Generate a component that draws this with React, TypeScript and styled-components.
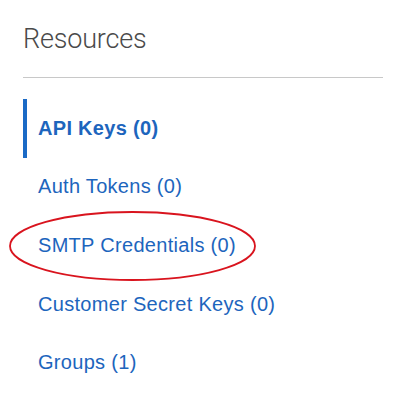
import styled, { createGlobalStyle } from "styled-components";

const GlobalStyle = createGlobalStyle`
  body {
    margin: 0;
    background: #ffffff;
    font-family: "Liberation Sans", Arial, sans-serif;
  }
`;

const resources = [
  { label: "API Keys", count: 0, active: true },
  { label: "Auth Tokens", count: 0 },
  { label: "SMTP Credentials", count: 0, circled: true },
  { label: "Customer Secret Keys", count: 0 },
  { label: "Groups", count: 1 },
];

export default function App() {
  return (
    <>
      <GlobalStyle />
      <Panel>
        <Heading>Resources</Heading>
        <Divider />
        <Menu>
          {resources.map((r) => (
            <Item key={r.label} $active={!!r.active}>
              <Link $active={!!r.active}>
                {r.label} ({r.count})
              </Link>
              {r.circled && (
                // red annotation ring around the item
                <Circle viewBox="0 0 249 72">
                  <ellipse
                    cx="124.5"
                    cy="36"
                    rx="122.5"
                    ry="34"
                    fill="none"
                    stroke="#d9141e"
                    strokeWidth="1.8"
                  />
                </Circle>
              )}
            </Item>
          ))}
        </Menu>
      </Panel>
    </>
  );
}

const Panel = styled.div`
  width: 400px;
  height: 420px;
  padding: 22px 17px 0 23px;
  box-sizing: border-box;
`;

const Heading = styled.h2`
  margin: 0;
  font-family: "Roboto", "Liberation Sans", sans-serif;
  font-weight: 300;
  font-size: 27px;
  line-height: 34px;
  color: #4a4a4a;
  letter-spacing: -0.2px;
`;

const Divider = styled.div`
  height: 1px;
  background: #c8c8c8;
  margin-top: 21px;
`;

const Menu = styled.ul`
  list-style: none;
  margin: 21px 0 0;
  padding: 0;
  display: flex;
  flex-direction: column;
`;

const Item = styled.li<{ $active: boolean }>`
  position: relative;
  height: 58.6px;
  display: flex;
  align-items: center;
  box-sizing: border-box;
  border-left: 4px solid ${(p) => (p.$active ? "#1a6ac6" : "transparent")};
  padding-left: 11px;
`;

const Link = styled.a<{ $active: boolean }>`
  font-size: 20px;
  font-weight: ${(p) => (p.$active ? 700 : 400)};
  letter-spacing: 0.3px;
  color: #1d65bd;
  cursor: pointer;
  white-space: nowrap;
`;

const Circle = styled.svg`
  position: absolute;
  left: -19px;
  top: -6px;
  width: 249px;
  height: 72px;
  pointer-events: none;
  overflow: visible;
`;
